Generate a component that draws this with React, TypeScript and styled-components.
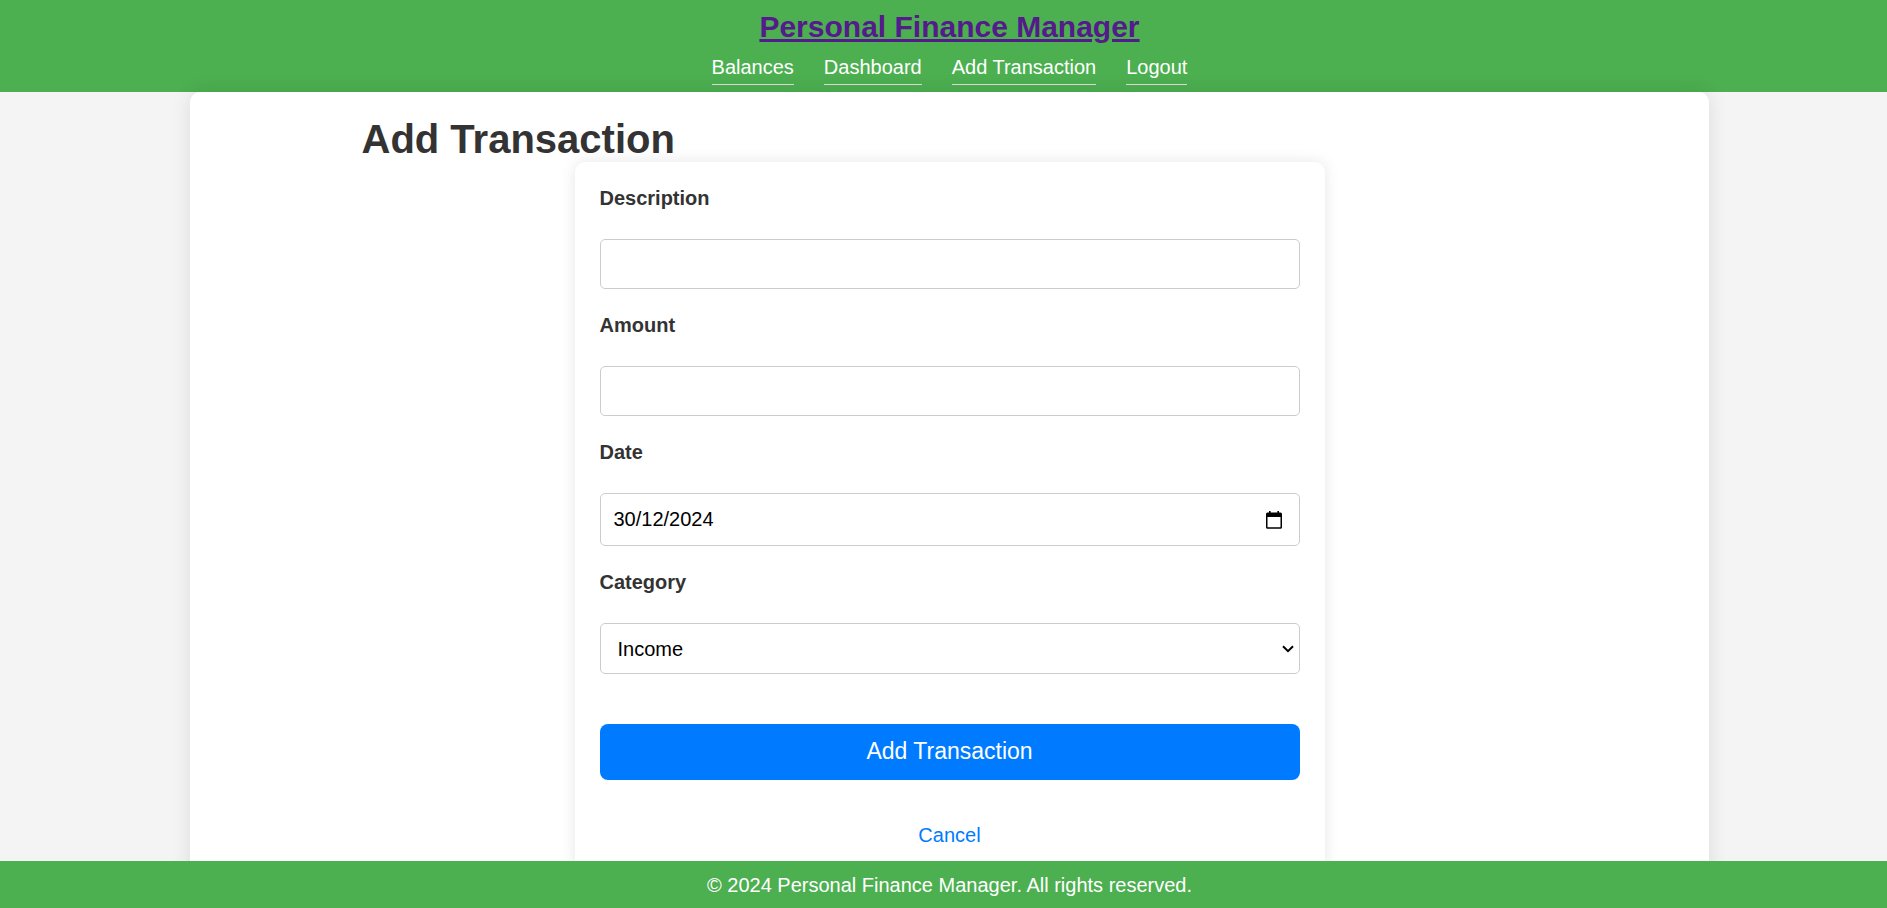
import React, { useState } from 'react';
import styled, { createGlobalStyle, css } from 'styled-components';

const GlobalStyle = createGlobalStyle`
  * { box-sizing: border-box; margin: 0; padding: 0; }
  html { overflow: hidden; }
  body {
    font-family: 'Liberation Sans', Arial, sans-serif;
    font-size: 20px;
    line-height: 32px;
    background: #f4f4f4;
    color: #333;
  }
`;

/* The page runs slightly past the right edge of the window. */
const Page = styled.div`
  width: calc(100% + 12px);
  height: 100vh;
  display: flex;
  flex-direction: column;
  overflow: hidden;
`;

const Header = styled.header`
  flex: none;
  background: #4caf50;
  padding: 6px 0 7px;
  text-align: center;
`;

const Brand = styled.h1`
  font-size: 30px;
  line-height: 42px;
  a { color: #551a8b; }
`;

const Nav = styled.nav`
  display: flex;
  justify-content: center;
  gap: 30px;
`;

const NavLink = styled.a`
  color: #fff;
  text-decoration: none;
  padding-top: 2px;
  line-height: 34px;
  border-bottom: 1px solid #ddd;
`;

const Content = styled.div`
  flex: 1;
  min-height: 0;
`;

const Main = styled.main`
  width: 80%;
  min-height: 100%;
  margin: 0 auto;
  padding: 20px;
  background: #fff;
  border-radius: 10px;
  box-shadow: 0 0 20px rgba(0, 0, 0, 0.1);
`;

const Inner = styled.div`
  max-width: 1176px;
  margin: 0 auto;
`;

const Title = styled.h2`
  padding-top: 4px;
  font-size: 40px;
  line-height: 46px;
`;

const Form = styled.form`
  display: flex;
  flex-direction: column;
  max-width: 750px;
  margin: 0 auto;
  padding: 20px 25px;
  background: #fff;
  border-radius: 10px;
  box-shadow: 0 0 15px rgba(0, 0, 0, 0.1);
`;

const Label = styled.label`
  font-weight: bold;
  margin-bottom: 25px;
`;

const outline = css`
  width: 100%;
  background: #fff;
  border: 1px solid #ccc;
  border-radius: 5px;
  margin-bottom: 20px;
`;

const controlText = css`
  font: 20px/24px 'Liberation Sans', Arial, sans-serif;
  color: #000;
`;

const Input = styled.input`
  ${outline}
  ${controlText}
  padding: 12px 13px;
`;

const DateField = styled.div`
  ${outline}
  display: flex;
  align-items: center;
  height: 53px;
  padding: 0 16px 0 13px;
`;

const DateInput = styled.input`
  ${controlText}
  flex: 1;
  min-width: 0;
  padding-bottom: 2px;
  border: 0;
  background: none;
`;

const PickerButton = styled.button`
  display: flex;
  border: 0;
  background: none;
`;

const SelectField = styled.div`
  ${outline}
  display: grid;
  align-items: center;
  height: 51px;
  > * { grid-area: 1 / 1; }
  > svg { justify-self: end; margin-right: 5px; pointer-events: none; }
`;

const Select = styled.select`
  ${controlText}
  appearance: none;
  width: 100%;
  height: 100%;
  padding: 0 17px;
  border: 0;
  background: none;
`;

const Submit = styled.button`
  height: 56px;
  margin: 30px 0 39px;
  padding-bottom: 2px;
  border: 0;
  border-radius: 8px;
  background: #007bff;
  color: #fff;
  font: 23px 'Liberation Sans', Arial, sans-serif;
`;

const Cancel = styled.a`
  align-self: center;
  color: #007bff;
  text-decoration: none;
`;

const Footer = styled.footer`
  flex: none;
  position: relative;
  z-index: 1;
  padding: 8px 0 7px;
  background: #4caf50;
  color: #fff;
  text-align: center;
`;

const links = ['Balances', 'Dashboard', 'Add Transaction', 'Logout'];

export default function App() {
  const [date, setDate] = useState('30/12/2024');
  return (
    <>
      <GlobalStyle />
      <Page>
        <Header>
          <Brand><a href="#home">Personal Finance Manager</a></Brand>
          <Nav>
            {links.map((text) => (
              <NavLink key={text} href={'#' + text.toLowerCase().replace(' ', '-')}>{text}</NavLink>
            ))}
          </Nav>
        </Header>
        <Content>
          <Main>
            <Inner>
              <Title>Add Transaction</Title>
              <Form>
                <Label htmlFor="description">Description</Label>
                <Input id="description" type="text" />
                <Label htmlFor="amount">Amount</Label>
                <Input id="amount" type="number" />
                <Label htmlFor="date">Date</Label>
                <DateField>
                  <DateInput id="date" type="text" inputMode="numeric" value={date} onChange={(e) => setDate(e.target.value)} />
                  <PickerButton type="button" aria-label="Choose date">
                    <svg width="18" height="18" viewBox="0 0 18 18" aria-hidden="true">
                      <path fill="#000" fillRule="evenodd" d="M4 0h1.6v1.4h6.8V0H14v1.4h1.5Q17 1.4 17 3v13.2q0 1.5-1.5 1.5h-13Q1 17.7 1 16.2V3q0-1.6 1.5-1.6H4zM2.500 6v10.200h13V6z" />
                    </svg>
                  </PickerButton>
                </DateField>
                <Label htmlFor="category">Category</Label>
                <SelectField>
                  <Select id="category">
                    <option>Income</option>
                    <option>Expense</option>
                  </Select>
                  <svg width="12" height="8" viewBox="0 0 12 8" aria-hidden="true">
                    <path d="M1 1.2l5 5 5-5" fill="none" stroke="#000" strokeWidth="2" />
                  </svg>
                </SelectField>
                <Submit type="button">Add Transaction</Submit>
                <Cancel href="#cancel">Cancel</Cancel>
              </Form>
            </Inner>
          </Main>
        </Content>
        <Footer>© 2024 Personal Finance Manager. All rights reserved.</Footer>
      </Page>
    </>
  );
}
